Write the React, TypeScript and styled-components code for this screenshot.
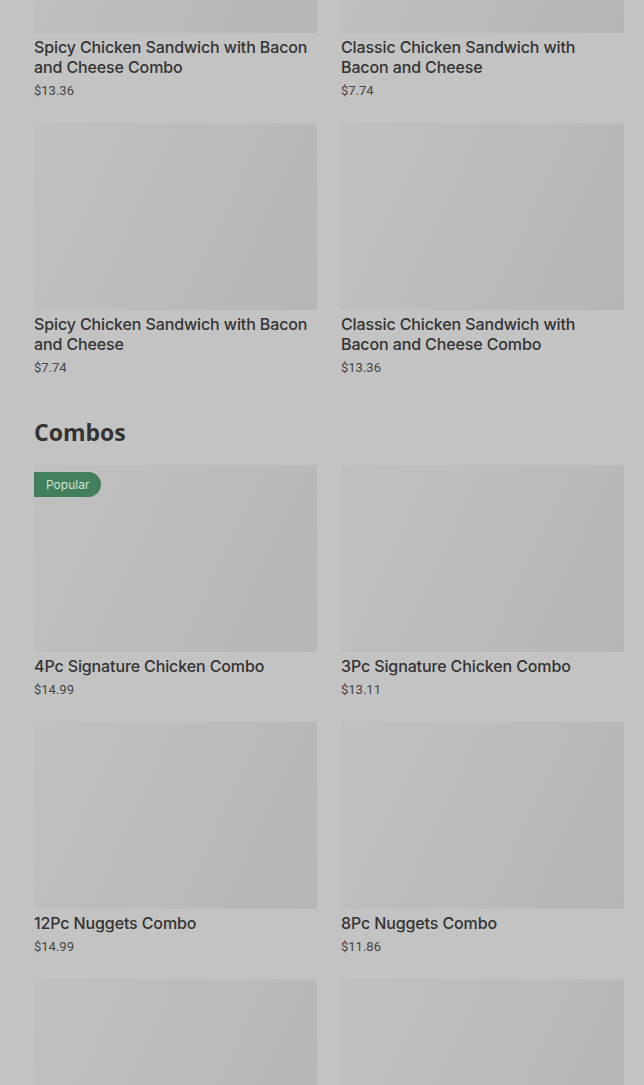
import React from 'react'
import styled, { createGlobalStyle } from 'styled-components'

const GlobalStyle = createGlobalStyle`
  html, body {
    margin: 0;
    padding: 0;
    background: #c3c3c3;
    overflow: hidden;
  }
  body {
    font-family: Inter, "Liberation Sans", Arial, sans-serif;
  }
`

type Item = { name: string; price: string; popular?: boolean }

const sandwiches: Item[] = [
  { name: 'Spicy Chicken Sandwich with Bacon and Cheese Combo', price: '$13.36' },
  { name: 'Classic Chicken Sandwich with Bacon and Cheese', price: '$7.74' },
  { name: 'Spicy Chicken Sandwich with Bacon and Cheese', price: '$7.74' },
  { name: 'Classic Chicken Sandwich with Bacon and Cheese Combo', price: '$13.36' },
]

const combos: Item[] = [
  { name: '4Pc Signature Chicken Combo', price: '$14.99', popular: true },
  { name: '3Pc Signature Chicken Combo', price: '$13.11' },
  { name: '12Pc Nuggets Combo', price: '$14.99' },
  { name: '8Pc Nuggets Combo', price: '$11.86' },
]

export default function App() {
  return (
    <>
      <GlobalStyle />
      <Page>
        <Grid>
          {sandwiches.map((item) => (
            <Card key={item.name} item={item} />
          ))}
        </Grid>
        <SectionTitle>Combos</SectionTitle>
        <Grid>
          {combos.map((item) => (
            <Card key={item.name} item={item} />
          ))}
          <Thumb />
          <Thumb />
        </Grid>
      </Page>
    </>
  )
}

function Card({ item }: { item: Item }) {
  return (
    <CardBox>
      <Thumb>
        {item.popular && <Badge>Popular</Badge>}
      </Thumb>
      <Name>{item.name}</Name>
      <Price>{item.price}</Price>
    </CardBox>
  )
}

const Page = styled.main`
  margin-top: -154px;
  padding: 0 20px 0 34px;
`

const Grid = styled.div`
  display: grid;
  grid-template-columns: 283px 283px;
  column-gap: 24px;
  row-gap: 24px;
`

const CardBox = styled.div`
  display: flex;
  flex-direction: column;
`

const Thumb = styled.div`
  position: relative;
  height: 187px;
  background: linear-gradient(115deg, #c0c0c0 0%, #bcbcbc 45%, #b6b6b6 100%);
`

const Badge = styled.span`
  position: absolute;
  top: 7px;
  left: 0;
  height: 25px;
  padding: 0 12px;
  display: flex;
  align-items: center;
  background: #427f5d;
  color: #d3e3d8;
  font-size: 12px;
  border-radius: 0 13px 13px 0;
`

const Name = styled.div`
  margin-top: 4px;
  font-size: 16px;
  line-height: 20px;
  font-weight: 500;
  letter-spacing: -0.12px;
  color: #333;
`

const Price = styled.div`
  margin-top: 6px;
  font-family: Roboto, "Liberation Sans", sans-serif;
  font-size: 13px;
  line-height: 16px;
  color: #454545;
`

const SectionTitle = styled.h2`
  margin: 42px 0 19px;
  font-family: "Open Sans", "Liberation Sans", sans-serif;
  font-size: 23px;
  line-height: 28px;
  font-weight: 700;
  color: #333;
`
